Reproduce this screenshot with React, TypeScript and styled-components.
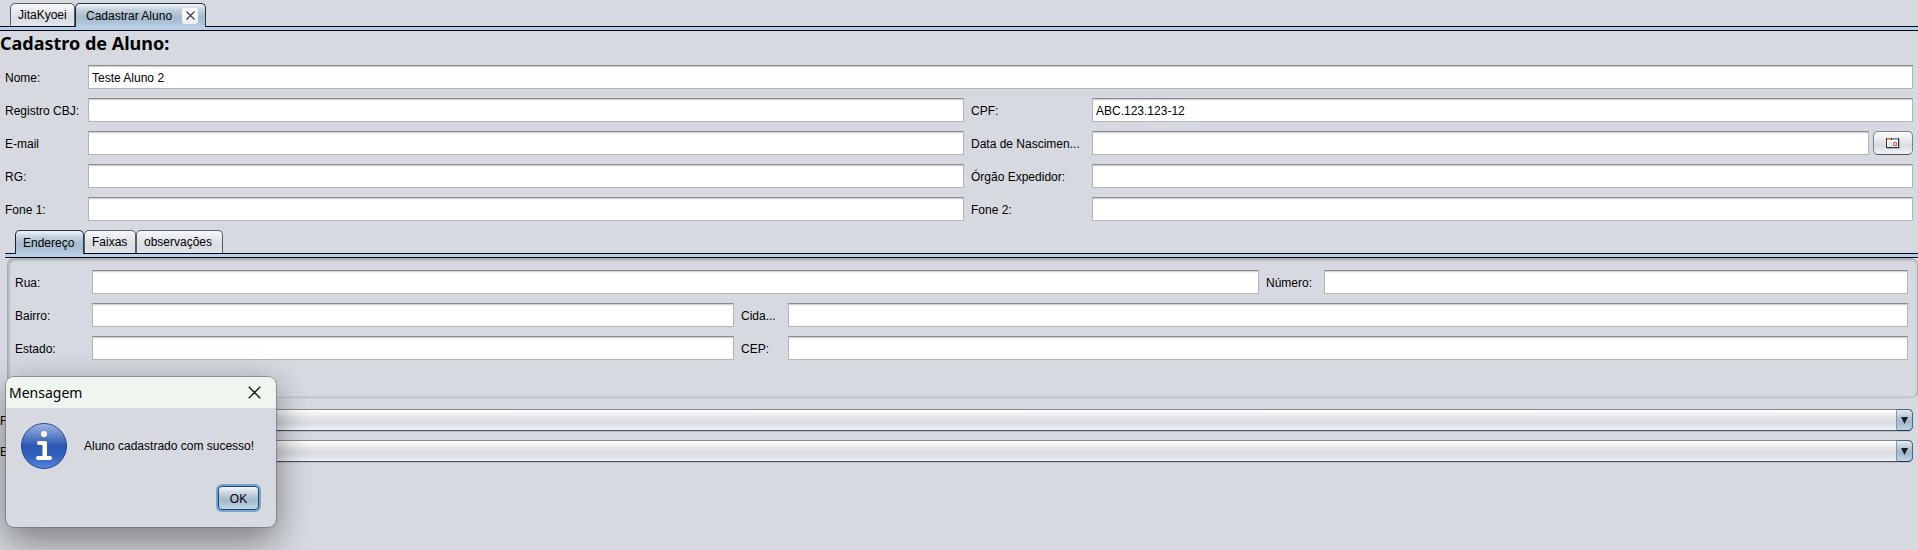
import React from "react";
import styled, { createGlobalStyle, css } from "styled-components";

const sans = '"Liberation Sans", Arial, sans-serif';

const GlobalStyle = createGlobalStyle`
  * { box-sizing: border-box; }
  body {
    margin: 0;
    background: #d6d9df;
    color: #000;
    font: 12px/16px ${sans};
  }
  button, input, select { font: inherit; color: inherit; margin: 0; }
`;

const Page = styled.div`
  position: relative;
  min-height: 100vh;
  overflow: hidden;
`;

const TabBar = styled.nav<{ $inset: number }>`
  display: flex;
  align-items: flex-end;
  height: 27px;
  padding-left: ${(p) => p.$inset}px;
  border-bottom: 1px solid #05061c;
`;

const tabSkin = css<{ $active?: boolean; $width: number }>`
  display: flex;
  align-items: center;
  width: ${(p) => p.$width}px;
  height: ${(p) => (p.$active ? 24 : 23)}px;
  margin-bottom: ${(p) => (p.$active ? -1 : 0)}px;
  padding: 0 0 0 7px;
  white-space: nowrap;
  border: 1px solid ${(p) => (p.$active ? "#1f3448" : "#5b5e66")};
  border-left-color: ${(p) => (p.$active ? "#12202f" : "#5b5e66")};
  border-bottom: 0;
  border-radius: 5px 5px 0 0;
  background: ${(p) =>
    p.$active
      ? "linear-gradient(#f0f4f8, #c5d2de 25%, #a6bbce 55%, #a9bfd3 75%, #b9d0e5)"
      : "linear-gradient(#f7f8fa, #e4e6ea 40%, #d9dce1 70%, #e3e6eb)"};
`;

const Tab = styled.button`
  ${tabSkin}
`;

const TabShell = styled.div`
  ${tabSkin}
  justify-content: space-between;
  padding: 0 7px 0 10px;
`;

const TabLabel = styled.button`
  padding: 0;
  border: 0;
  background: none;
`;

const TabClose = styled.button`
  display: grid;
  place-items: center;
  width: 16px;
  height: 16px;
  padding: 0;
  border: 0;
  border-radius: 3px;
  background: linear-gradient(#fff, #eceef1);
`;

const Strip = styled.div`
  height: 4px;
  background: #b8cfe5;
  border-bottom: 1px solid #05061c;
`;

const Title = styled.h1`
  margin: 0;
  padding-bottom: 1px;
  font: bold 18px/24px "Noto Sans", "Open Sans", sans-serif;
`;

const Form = styled.form`
  display: block;
`;

const Rows = styled.div`
  display: grid;
  gap: 9px;
  padding: 9px 5px 6px;
`;

const Row = styled.div<{ $columns: string }>`
  display: grid;
  grid-template-columns: ${(p) => p.$columns};
  column-gap: 7px;
  align-items: center;
`;

const Label = styled.label`
  padding-top: 2px;
  white-space: nowrap;
`;

const TextField = styled.input`
  width: 100%;
  min-width: 0;
  height: 24px;
  padding: 2px 3px 0;
  border: 1px solid #b4b6ba;
  border-top-color: #8a8b8e;
  border-radius: 0;
  outline: 0;
  background: #fff;
  box-shadow: inset 0 1px #d3d4d6, inset 0 2px #f3f3f4;
`;

const DateGroup = styled.div`
  display: grid;
  grid-template-columns: minmax(0, 1fr) 40px;
  gap: 4px;
`;

const DateButton = styled.button`
  display: grid;
  place-items: center;
  height: 24px;
  padding: 0;
  border: 1px solid #7f8288;
  border-bottom-color: #4f5156;
  border-radius: 5px;
  background: linear-gradient(#fdfdfe, #e6e8ec 40%, #d8dbe0 60%, #f2f4f8);
`;

const Section = styled.section`
  padding-left: 5px;
`;

const Panel = styled.div`
  display: grid;
  align-content: start;
  gap: 9px;
  margin-left: 2px;
  padding: 11px 9px 37px 7px;
  border: 1px solid #a9abb0;
  border-bottom-color: #bcbec2;
  border-radius: 7px;
  box-shadow: inset 1px 1px 3px #a4a6ab;
`;

const Combos = styled.div`
  display: grid;
  gap: 9px;
  padding: 11px 5px 0 0;
`;

const Combo = styled.div`
  position: relative;
  height: 22px;
`;

const Select = styled.select`
  appearance: none;
  display: block;
  width: 100%;
  height: 22px;
  padding: 0 20px 0 6px;
  border: 1px solid #888b92;
  border-bottom-color: #4e525b;
  border-radius: 5px;
  outline: 0;
  background: linear-gradient(#fdfdfe, #e2e4e7 40%, #d8dbdf 65%, #eef1f8);
  box-shadow: 0 1px #bfc2c8;
`;

const Arrow = styled.span`
  position: absolute;
  inset: 0 0 0 auto;
  display: grid;
  place-items: center;
  width: 17px;
  border: 1px solid #4d6479;
  border-left-color: #7d97ad;
  border-bottom-color: #1f3850;
  border-radius: 0 5px 5px 0;
  background: linear-gradient(#e4ecf3, #b0c2d2 40%, #a3b8cb 60%, #bcd3e7);
  pointer-events: none;
`;

const Dialog = styled.div`
  position: absolute;
  left: 6px;
  top: 377px;
  width: 270px;
  overflow: hidden;
  border-radius: 8px;
  background: #d6d9df;
  box-shadow: 0 0 0 1px rgba(110, 112, 116, 0.65), 0 18px 36px rgba(0, 0, 0, 0.32),
    0 2px 32px rgba(0, 0, 0, 0.16);
`;

const DialogHeader = styled.header`
  display: flex;
  align-items: center;
  justify-content: space-between;
  height: 31px;
  padding: 0 15px 0 3px;
  background: #eef6ef;
`;

const DialogTitle = styled.h2`
  margin: 0;
  font: 14px/20px "Noto Sans", "Open Sans", sans-serif;
`;

const CloseButton = styled.button`
  display: grid;
  padding: 0;
  border: 0;
  background: none;
`;

const DialogBody = styled.div`
  display: flex;
  align-items: center;
  gap: 17px;
  padding: 15px 0 0 15px;
`;

const Message = styled.p`
  margin: 0;
  white-space: nowrap;
`;

const DialogFooter = styled.footer`
  display: flex;
  justify-content: flex-end;
  padding: 17px;
`;

const OkButton = styled.button`
  width: 41px;
  height: 24px;
  padding: 2px 0 0;
  border: 1px solid #26455f;
  border-radius: 4px;
  background: linear-gradient(#f2f6fa, #bfcddb 35%, #a3b8cb 60%, #bfd6ea);
  box-shadow: 0 0 0 2px #73a4d1;
`;

const FULL = "76px minmax(0, 1fr)";
const COMBO = "81px minmax(0, 1fr)";
const HALVES = "76px minmax(0, 876fr) 114px minmax(0, 821fr)";
const STREET = "70px minmax(0, 1167fr) 51px minmax(0, 584fr)";
const CITY = "70px minmax(0, 642fr) 40px minmax(0, 1120fr)";

type FieldProps = { id: string; label: string; value?: string };

const Field = ({ id, label, value = "" }: FieldProps) => (
  <>
    <Label htmlFor={id}>{label}</Label>
    <TextField id={id} type="text" defaultValue={value} />
  </>
);

const Cross = ({ size, width, color }: { size: number; width: number; color: string }) => (
  <svg width={size} height={size} viewBox="0 0 12 12" aria-hidden="true">
    <path d="M.7.7l10.6 10.6M11.3.7L.7 11.3" stroke={color} strokeWidth={width} fill="none" />
  </svg>
);

const CalendarIcon = () => (
  <svg width="14" height="11" viewBox="0 0 14 11" aria-hidden="true">
    <path d="M1 1h13v10H1z" fill="#b5b7bb" />
    <path d="M0 0h13v10H0z" fill="#33343a" />
    <path d="M1 2h11v7H1z" fill="#f6f6f6" />
    <path d="M1 1h4v1H1z" fill="#f3ab32" />
    <path d="M6 1h6v1H6z" fill="#8dbbe9" />
    <path d="M1 0h4v1H1z" fill="#b98a3c" />
    <path d="M6 0h6v1H6z" fill="#6d8db0" />
    <path d="M3.500 4v5M5.500 4v5" stroke="#d9d9d9" />
    <circle cx="9" cy="6" r="1.600" fill="#fff" stroke="#e2504c" strokeWidth="1.2" />
  </svg>
);

const InfoIcon = () => (
  <svg width="46" height="46" viewBox="0 0 46 46" aria-hidden="true">
    <defs>
      <linearGradient id="infoFill" x1="0" y1="0" x2="0" y2="1">
        <stop offset="0" stopColor="#a3b8e4" />
        <stop offset=".25" stopColor="#6387cb" />
        <stop offset=".5" stopColor="#2c58b2" />
        <stop offset=".75" stopColor="#3563bf" />
        <stop offset="1" stopColor="#5a86dc" />
      </linearGradient>
    </defs>
    <circle cx="23" cy="23" r="22.5" fill="url(#infoFill)" stroke="#24458f" />
    <circle cx="23" cy="11" r="3.100" fill="#fff" />
    <path
      d="M18 18h6.500q1.500 0 1.500 1.500V33h3q2 0 2 2t-2 2H17q-2 0-2-2t2-2h4.500V22H18q-2 0-2-2t2-2z"
      fill="#fff"
    />
  </svg>
);

const ComboRow = ({ id, label }: { id: string; label: string }) => (
  <Row $columns={COMBO}>
    <Label htmlFor={id}>{label}</Label>
    <Combo>
      <Select id={id}>
        <option value="" />
      </Select>
      <Arrow>
        <svg width="7" height="7" viewBox="0 0 7 7" aria-hidden="true">
          <path d="M0 0h7L3.500 7z" fill="#1c1f22" />
        </svg>
      </Arrow>
    </Combo>
  </Row>
);

export default function App() {
  return (
    <Page>
      <GlobalStyle />
      <TabBar $inset={10}>
        <Tab type="button" $width={65}>JitaKyoei</Tab>
        <TabShell $active $width={131}>
          <TabLabel type="button">Cadastrar Aluno</TabLabel>
          <TabClose type="button" aria-label="Fechar aba">
            <Cross size={9} width={1.6} color="#3c3e42" />
          </TabClose>
        </TabShell>
      </TabBar>
      <Strip />
      <Title>Cadastro de Aluno:</Title>
      <Form onSubmit={(e) => e.preventDefault()}>
        <Rows>
          <Row $columns={FULL}>
            <Field id="nome" label="Nome:" value="Teste Aluno 2" />
          </Row>
          <Row $columns={HALVES}>
            <Field id="registro" label="Registro CBJ:" />
            <Field id="cpf" label="CPF:" value="ABC.123.123-12" />
          </Row>
          <Row $columns={HALVES}>
            <Field id="email" label="E-mail" />
            <Label htmlFor="nascimento">Data de Nascimen...</Label>
            <DateGroup>
              <TextField id="nascimento" type="text" />
              <DateButton type="button" aria-label="Escolher data">
                <CalendarIcon />
              </DateButton>
            </DateGroup>
          </Row>
          <Row $columns={HALVES}>
            <Field id="rg" label="RG:" />
            <Field id="orgao" label="Órgão Expedidor:" />
          </Row>
          <Row $columns={HALVES}>
            <Field id="fone1" label="Fone 1:" />
            <Field id="fone2" label="Fone 2:" />
          </Row>
        </Rows>
        <Section>
          <TabBar $inset={10}>
            <Tab type="button" $active $width={69}>Endereço</Tab>
            <Tab type="button" $width={52}>Faixas</Tab>
            <Tab type="button" $width={87}>observações</Tab>
          </TabBar>
          <Strip />
          <Panel>
            <Row $columns={STREET}>
              <Field id="rua" label="Rua:" />
              <Field id="numero" label="Número:" />
            </Row>
            <Row $columns={CITY}>
              <Field id="bairro" label="Bairro:" />
              <Field id="cidade" label="Cida..." />
            </Row>
            <Row $columns={CITY}>
              <Field id="estado" label="Estado:" />
              <Field id="cep" label="CEP:" />
            </Row>
          </Panel>
        </Section>
        <Combos>
          <ComboRow id="combo1" label="F" />
          <ComboRow id="combo2" label="E" />
        </Combos>
      </Form>
      <Dialog role="dialog" aria-labelledby="dialogTitle">
        <DialogHeader>
          <DialogTitle id="dialogTitle">Mensagem</DialogTitle>
          <CloseButton type="button" aria-label="Fechar">
            <Cross size={13} width={1.2} color="#111" />
          </CloseButton>
        </DialogHeader>
        <DialogBody>
          <InfoIcon />
          <Message>Aluno cadastrado com sucesso!</Message>
        </DialogBody>
        <DialogFooter>
          <OkButton type="button">OK</OkButton>
        </DialogFooter>
      </Dialog>
    </Page>
  );
}
